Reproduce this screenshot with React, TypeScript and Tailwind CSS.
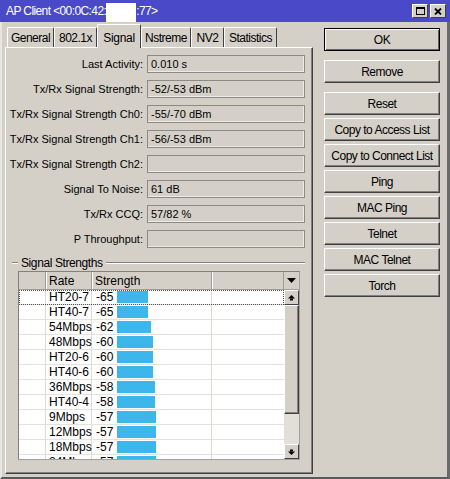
const fields = [
  ['Last Activity:', '0.010 s'],
  ['Tx/Rx Signal Strength:', '-52/-53 dBm'],
  ['Tx/Rx Signal Strength Ch0:', '-55/-70 dBm'],
  ['Tx/Rx Signal Strength Ch1:', '-56/-53 dBm'],
  ['Tx/Rx Signal Strength Ch2:', ''],
  ['Signal To Noise:', '61 dB'],
  ['Tx/Rx CCQ:', '57/82 %'],
  ['P Throughput:', ''],
];

const tabs = [
  { label: 'General', w: 'w-[47px]' },
  { label: '802.1x', w: 'w-[43px]' },
  { label: 'Signal', w: 'w-[44px]', active: true },
  { label: 'Nstreme', w: 'w-[50px]' },
  { label: 'NV2', w: 'w-[33px]' },
  { label: 'Statistics', w: 'w-[53px]' },
];

const rates = [
  ['HT20-7', -65],
  ['HT40-7', -65],
  ['54Mbps', -62],
  ['48Mbps', -60],
  ['HT20-6', -60],
  ['HT40-6', -60],
  ['36Mbps', -58],
  ['HT40-4', -58],
  ['9Mbps', -57],
  ['12Mbps', -57],
  ['18Mbps', -57],
  ['24Mbps', -57],
] as const;

const buttons = [
  { label: 'Remove', gap: 'mt-[9px]' },
  { label: 'Reset', gap: 'mt-[9px]' },
  { label: 'Copy to Access List', gap: 'mt-[3px]' },
  { label: 'Copy to Connect List', gap: 'mt-[3px]' },
  { label: 'Ping', gap: 'mt-[3px]' },
  { label: 'MAC Ping', gap: 'mt-[3px]' },
  { label: 'Telnet', gap: 'mt-[3px]' },
  { label: 'MAC Telnet', gap: 'mt-[3px]' },
  { label: 'Torch', gap: 'mt-[3px]' },
];

function ScrollArrow({ down }: { down?: boolean }) {
  return (
    <svg width="7" height="6" viewBox="0 0 7 6" className={down ? 'rotate-180' : ''}>
      <path d="M3.5 0 L7 3.5 L0 3.5 Z" fill="#000" />
      <rect x="2" y="3.5" width="3" height="2" fill="#000" />
    </svg>
  );
}

function Etch({ className }: { className: string }) {
  return <div className={`h-[2px] border-t border-t-[#808080] border-b border-b-white ${className}`} />;
}

export default function App() {
  return (
    <div className="w-[450px] h-[479px] flex flex-col bg-[#d4d0c8] text-black text-[11px] font-['Liberation_Sans',Arial,sans-serif] overflow-hidden">
      {/* title bar */}
      <div className="h-[22px] shrink-0 flex items-center bg-[#4a4ac8] text-white text-[12px] pl-[6px] pr-[4px]">
        <span className="tracking-[-0.6px]">AP Client &lt;00:0C:42:</span>
        <span className="inline-block w-[30px] h-[19px] mt-[3px] bg-white" />
        <span className="tracking-[-0.6px]">:77&gt;</span>
        <div className="ml-auto flex gap-[2px]">
          <div className="w-[16px] h-[14px] flex items-center justify-center bg-[#d4d0c8] border border-t-white border-l-white border-r-[#404040] border-b-[#404040]">
            <div className="w-[9px] h-[8px] border border-black border-t-2" />
          </div>
          <div className="w-[16px] h-[14px] flex items-center justify-center bg-[#d4d0c8] border border-t-white border-l-white border-r-[#404040] border-b-[#404040]">
            <svg width="8" height="7" viewBox="0 0 8 7">
              <path d="M1 0.5 L7 6.5 M7 0.5 L1 6.5" stroke="#000" strokeWidth="1.8" />
            </svg>
          </div>
        </div>
      </div>

      {/* body */}
      <div className="flex-1 flex border-l-2 border-l-[#e8e6e0] border-r-[3px] border-r-[#6a6a6a] border-b-[2px] border-b-[#5a5a5a]">
        {/* left: tabs + panel */}
        <div className="w-[308px] ml-[3px] flex flex-col">
          <div className="h-[25px] flex items-end pl-[2px]">
            {tabs.map((t) =>
              t.active ? (
                <div
                  key={t.label}
                  className={`${t.w} h-[24px] -mb-px relative z-10 bg-[#d4d0c8] flex justify-center pt-[4px] text-[12px] tracking-[-0.3px] border-t border-l border-t-white border-l-white border-r border-r-[#404040] rounded-t-[2px]`}
                >
                  {t.label}
                </div>
              ) : (
                <div
                  key={t.label}
                  className={`${t.w} h-[20px] flex items-center justify-center text-[12px] tracking-[-0.5px] border-t border-l border-t-white border-l-white border-r border-r-[#404040] rounded-t-[2px]`}
                >
                  {t.label}
                </div>
              ),
            )}
          </div>

          <div className="h-[427px] flex flex-col border border-t-white border-l-white border-r-[#404040] border-b-[#404040] shadow-[inset_-1px_-1px_0_#808080]">
            <div className="flex flex-col gap-[7px] pt-[7px]">
              {fields.map(([label, value]) => (
                <div key={label} className="flex items-center gap-[4px] h-[18px]">
                  <div className="w-[137px] text-right whitespace-nowrap">{label}</div>
                  <div className="w-[158px] h-[18px] flex items-center pl-[3px] border border-[#8c8a86] shadow-[inset_-1px_-1px_0_#ecebe7]">
                    {value}
                  </div>
                </div>
              ))}
            </div>

            {/* group header */}
            <div className="mt-[6px] h-[17px] flex items-center">
              <Etch className="w-[6px] ml-[6px]" />
              <span className="px-[3px] text-[12px] tracking-[-0.4px] leading-none">Signal Strengths</span>
              <Etch className="flex-1 mr-[7px]" />
            </div>

            {/* table */}
            <div className="ml-[12px] w-[282px] h-[189px] flex flex-col border border-t-[#808080] border-l-[#808080] border-r-[#a0a0a0] border-b-[#a0a0a0]">
              <div className="h-[18px] flex text-[12px]">
                <div className="w-[27px] border-r border-r-[#a09d96] border-b border-b-[#a09d96]" />
                <div className="w-[46px] pl-[3px] flex items-center border-r border-r-[#a09d96] border-b border-b-[#a09d96] shadow-[inset_1px_0_0_#fff]">Rate</div>
                <div className="w-[120px] pl-[3px] flex items-center border-r border-r-[#a09d96] border-b border-b-[#a09d96] shadow-[inset_1px_0_0_#fff]">Strength</div>
                <div className="w-[72px] border-r border-r-[#a09d96] border-b border-b-[#a09d96] shadow-[inset_1px_0_0_#fff]" />
                <div className="w-[15px] flex items-center justify-center border-b border-b-[#a09d96]">
                  <svg width="9" height="5" viewBox="0 0 9 5">
                    <path d="M0 0 L9 0 L4.5 5 Z" fill="#000" />
                  </svg>
                </div>
              </div>
              <div className="flex-1 flex">
                <div className="w-[265px] h-[169px] overflow-hidden bg-white text-[12px]">
                  {rates.map(([rate, val], i) => (
                    <div
                      key={rate}
                      className={`h-[15px] flex border-b border-b-[#e4e2dc] ${i === 0 ? 'outline-1 outline-dotted outline-[#555] -outline-offset-1' : ''}`}
                    >
                      <div className="w-[27px] border-r border-r-[#dedbd4]" />
                      <div className="w-[46px] pl-[3px] flex items-center border-r border-r-[#dedbd4]">{rate}</div>
                      <div className="w-[120px] pl-[4px] flex items-center border-r border-r-[#dedbd4]">
                        <span className="w-[21px]">{val}</span>
                        <div className="h-[12px] bg-[#3db6ec]" style={{ width: 96 + val }} />
                      </div>
                      <div className="w-[72px]" />
                    </div>
                  ))}
                </div>
                <div className="w-[15px] flex flex-col">
                  <div className="h-[15px] flex items-center justify-center border border-t-white border-l-white border-r-[#404040] border-b-[#404040]">
                    <ScrollArrow />
                  </div>
                  <div className="h-[109px] border border-t-white border-l-white border-r-[#404040] border-b-[#404040] shadow-[inset_-1px_-1px_0_#808080]" />
                  <div className="flex-1 bg-[#e2dfd9]" />
                  <div className="h-[15px] flex items-center justify-center border border-t-white border-l-white border-r-[#404040] border-b-[#404040]">
                    <ScrollArrow down />
                  </div>
                </div>
              </div>
            </div>
          </div>
        </div>

        {/* right: buttons */}
        <div className="w-[116px] ml-[11px] pt-[6px] flex flex-col text-[12px] tracking-[-0.5px]">
          <div className="h-[23px] flex items-center justify-center border border-black shadow-[inset_1px_1px_0_#fff,inset_-1px_-1px_0_#606060]">
            OK
          </div>
          {buttons.map((b) => (
            <div
              key={b.label}
              className={`${b.gap} h-[23px] flex items-center justify-center whitespace-nowrap border border-t-white border-l-white border-r-[#404040] border-b-[#404040] shadow-[inset_-1px_-1px_0_#808080]`}
            >
              {b.label}
            </div>
          ))}
        </div>
      </div>
    </div>
  );
}
